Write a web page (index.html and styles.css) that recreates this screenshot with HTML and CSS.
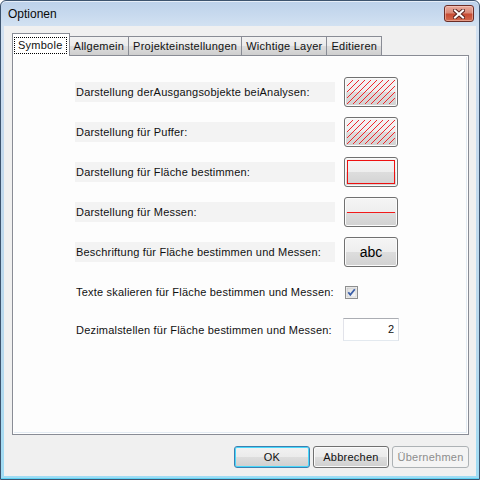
FILE: index.html
```html
<!DOCTYPE html>
<html lang="de">
<head>
<meta charset="utf-8">
<title>Optionen</title>
<link rel="stylesheet" href="styles.css">
</head>
<body>
<svg class="defs" width="0" height="0" aria-hidden="true">
  <defs>
    <pattern id="hatch" width="6" height="6" patternUnits="userSpaceOnUse">
      <path d="M0 6 L6 0 M-1 1 L1 -1 M5 7 L7 5" stroke="#f0262a" stroke-width="1.1" shape-rendering="crispEdges"/>
    </pattern>
  </defs>
</svg>
<div class="window">
  <div class="titlebar">
    <span class="title">Optionen</span>
    <div class="close">
      <svg width="12" height="10" viewBox="0 0 12 10">
        <path d="M2 1.5 L10 8.5 M10 1.5 L2 8.5" stroke="#5b2520" stroke-width="4" stroke-linecap="square"/>
        <path d="M2 1.5 L10 8.5 M10 1.5 L2 8.5" stroke="#ffffff" stroke-width="2" stroke-linecap="square"/>
      </svg>
    </div>
  </div>
  <div class="client">
    <div class="tabs">
      <div class="tab active"><span class="focus">Symbole</span></div>
      <div class="tab">Allgemein</div>
      <div class="tab">Projekteinstellungen</div>
      <div class="tab">Wichtige Layer</div>
      <div class="tab">Editieren</div>
    </div>
    <div class="panel">
      <div class="row">
        <div class="label shaded">Darstellung derAusgangsobjekte beiAnalysen:</div>
        <div class="swatch"><svg class="fill" viewBox="0 0 48 24" preserveAspectRatio="none"><rect width="48" height="24" fill="url(#hatch)"/></svg></div>
      </div>
      <div class="row">
        <div class="label shaded">Darstellung für Puffer:</div>
        <div class="swatch"><svg class="fill" viewBox="0 0 48 24" preserveAspectRatio="none"><rect width="48" height="24" fill="url(#hatch)"/></svg></div>
      </div>
      <div class="row">
        <div class="label shaded">Darstellung für Fläche bestimmen:</div>
        <div class="swatch"><div class="fill outline"></div></div>
      </div>
      <div class="row">
        <div class="label shaded">Darstellung für Messen:</div>
        <div class="swatch"><div class="fill line"><div class="redline"></div></div></div>
      </div>
      <div class="row">
        <div class="label shaded">Beschriftung für Fläche bestimmen und Messen:</div>
        <div class="swatch abc">abc</div>
      </div>
      <div class="row">
        <div class="label">Texte skalieren für Fläche bestimmen und Messen:</div>
        <div class="checkbox">
          <svg width="13" height="13" viewBox="0 0 13 13">
            <defs>
              <linearGradient id="cb" x1="0" y1="0" x2="1" y2="1">
                <stop offset="0" stop-color="#dcdcdc"/>
                <stop offset="1" stop-color="#fafafa"/>
              </linearGradient>
            </defs>
            <rect x="0.5" y="0.5" width="12" height="12" fill="#f4f4f4" stroke="#8e8f8f"/>
            <rect x="2" y="2" width="9" height="9" fill="url(#cb)" stroke="#bcbcbc" stroke-width="0.5"/>
            <path d="M3.3 6.3 L5.3 8.8 L9.8 3.3" fill="none" stroke="#3b5fa8" stroke-width="1.8"/>
          </svg>
        </div>
      </div>
      <div class="row short">
        <div class="label">Dezimalstellen für Fläche bestimmen und Messen:</div>
        <div class="input">2</div>
      </div>
    </div>
    <div class="buttons">
      <div class="btn default">OK</div>
      <div class="btn">Abbrechen</div>
      <div class="btn disabled">Übernehmen</div>
    </div>
  </div>
</div>
</body>
</html>
```

FILE: styles.css
```css
html, body {
  margin: 0;
  padding: 0;
  width: 480px;
  height: 480px;
  overflow: hidden;
  background: #ffffff;
}

body {
  font-family: "Liberation Sans", Arial, sans-serif;
  font-size: 11px;
  color: #111;
}

.defs {
  display: block;
  width: 0;
  height: 0;
  overflow: hidden;
}

.window {
  width: 480px;
  height: 480px;
  box-sizing: border-box;
  border: 1px solid #3d546f;
  border-radius: 6px 6px 0 0;
  background: linear-gradient(180deg, #bcd1ea 0px, #c8daee 14px, #d3e2f2 26px, #c6daee 120px, #b7d9ee 360px, #9fdcf4 480px);
  box-shadow: inset 0 1px 0 #e6eef8, inset 0 -1px 0 #5fd3f5;
  padding: 0 3px 3px 3px;
  display: flex;
  flex-direction: column;
}

.titlebar {
  height: 25px;
  display: flex;
  align-items: flex-start;
  justify-content: space-between;
  flex: none;
}

.title {
  font-size: 12px;
  color: #0a0a0a;
  margin-left: 4px;
  margin-top: 6px;
  line-height: 14px;
}

.close {
  width: 30px;
  height: 17px;
  box-sizing: border-box;
  margin-top: 4px;
  margin-right: 2px;
  border: 1px solid #6b2d26;
  border-radius: 3px;
  background: linear-gradient(180deg, #e9ab9e 0%, #d98a78 45%, #c74b33 55%, #d26b4f 100%);
  box-shadow: inset 0 0 0 1px rgba(255, 220, 210, 0.45);
  display: flex;
  align-items: center;
  justify-content: center;
}

.client {
  flex: 1;
  background: #f0f0f0;
  padding: 7px 7px 0 8px;
  display: flex;
  flex-direction: column;
  min-height: 0;
}

.tabs {
  display: flex;
  align-items: flex-end;
  height: 22px;
  flex: none;
}

.tab {
  height: 19px;
  box-sizing: border-box;
  border: 1px solid #898c95;
  border-bottom: none;
  padding: 0 4px;
  margin-right: -1px;
  line-height: 19px;
  letter-spacing: 0.25px;
  background: linear-gradient(180deg, #f2f2f2 0%, #ebebeb 50%, #dddddd 51%, #cfcfcf 100%);
  white-space: nowrap;
}

.tab.active {
  height: 23px;
  margin-bottom: -1px;
  position: relative;
  z-index: 1;
  background: #ffffff;
  padding: 3px 2px 0 1px;
  margin-right: -1px;
}

.focus {
  display: block;
  border: 1px dotted #000;
  padding: 0 3px;
  height: 15px;
  line-height: 15px;
}

.panel {
  flex: 1;
  box-sizing: border-box;
  border: 1px solid #898c95;
  background: #fdfdfd;
  box-shadow: inset 0 0 0 1px #ffffff, inset -1px -1px 0 1px #e3ebf3;
  padding: 21px 0 0 62px;
  display: flex;
  flex-direction: column;
}

.row {
  display: flex;
  align-items: center;
  height: 30px;
  margin-bottom: 10px;
}

.row.short {
  height: 25px;
}

.label {
  width: 260px;
  height: 20px;
  line-height: 20px;
  margin-right: 9px;
  padding-left: 1px;
  box-sizing: border-box;
  letter-spacing: 0.2px;
  white-space: nowrap;
}

.label.shaded {
  background: #f3f3f3;
}

.swatch {
  width: 54px;
  height: 30px;
  box-sizing: border-box;
  border: 1px solid #707070;
  border-radius: 3px;
  box-shadow: inset 0 0 0 1px #fbfbfb;
  background: linear-gradient(180deg, #f5f5f5 0%, #eeeeee 50%, #dddddd 51%, #d2d2d2 100%);
  padding: 2px;
  display: flex;
}

.fill {
  flex: 1;
  width: 48px;
  height: 24px;
  display: block;
}

.outline {
  box-sizing: border-box;
  border: 1px solid #ee1111;
}

.line {
  display: flex;
  align-items: center;
}

.redline {
  height: 1px;
  flex: 1;
  background: #f21a1a;
}

.swatch.abc {
  align-items: center;
  justify-content: center;
  font-size: 14px;
  color: #000;
}

.checkbox {
  width: 13px;
  height: 13px;
  margin-left: 1px;
  margin-top: 1px;
  display: flex;
}

.input {
  width: 56px;
  height: 23px;
  box-sizing: border-box;
  margin-left: -1px;
  border: 1px solid;
  border-color: #abadb3 #dbdfe6 #e3e9ef #e2e3ea;
  background: #ffffff;
  text-align: right;
  padding-right: 4px;
  line-height: 21px;
  font-size: 11px;
}

.buttons {
  flex: none;
  display: flex;
  justify-content: flex-end;
  gap: 3px;
  margin-top: 11px;
  margin-bottom: 8px;
}

.btn {
  width: 76px;
  height: 22px;
  box-sizing: border-box;
  border: 1px solid #707070;
  border-radius: 3px;
  box-shadow: inset 0 0 0 1px #fbfbfb;
  background: linear-gradient(180deg, #f2f2f2 0%, #ebebeb 50%, #dddddd 51%, #cfcfcf 100%);
  text-align: center;
  line-height: 20px;
  letter-spacing: 0.25px;
}

.btn.default {
  border-color: #3c7fb1;
  box-shadow: inset 0 0 0 1px #48d8fb;
}

.btn.disabled {
  width: 77px;
  border-color: #adb2b5;
  background: #f4f4f4;
  box-shadow: none;
  color: #8d8d8d;
}
```
